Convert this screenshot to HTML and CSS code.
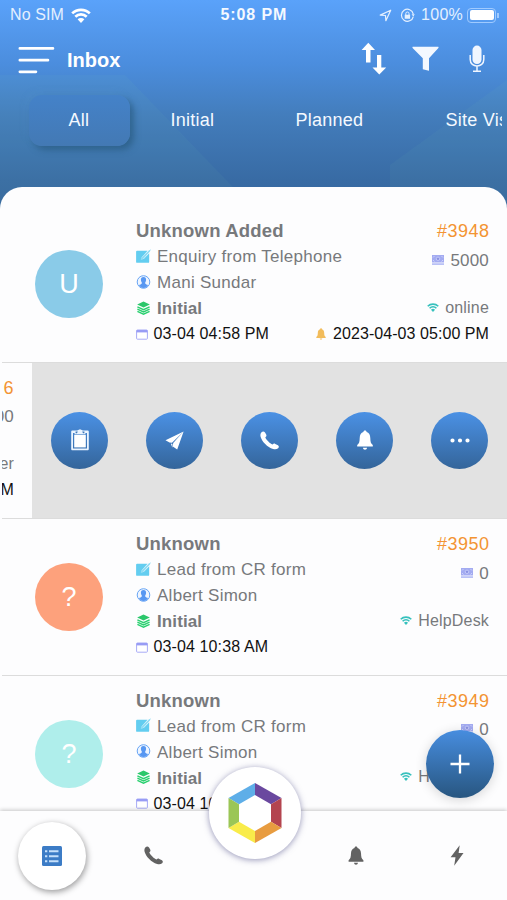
FILE: index.html
```
<!DOCTYPE html>
<html lang="en">
<head>
<meta charset="utf-8">
<title>Inbox</title>
<link rel="stylesheet" href="styles.css">
</head>
<body>
<svg class="defs" width="0" height="0">
  <defs>
    <symbol id="i-edit" viewBox="0 0 14 13"><path fill="#63cdf0" d="M1 1.600h9.800L5.500 7.500 5 9.700l2.400-.6L12.300 4V12a.9.900 0 0 1-.9.9H1a.9.900 0 0 1-.9-.9V2.500A.9.900 0 0 1 1 1.600z"/><path fill="#8fdcf4" d="M5 7.900 12 1.300 13.900.2l-.9 2.100L7 9l-2.600.9z"/></symbol>
    <symbol id="i-user" viewBox="0 0 14 14"><circle cx="7" cy="7" r="6.300" fill="#eef5ff" stroke="#68a5f5" stroke-width="1"/><path fill="#5797f2" d="M7 2c1.800 0 2.700 1.300 2.600 3-.1 1.300-.5 1.900-.9 2.500-.2 1.200 0 1.500 2.900 2.600C10.500 12 9 13 7 13s-3.500-1-4.600-2.900c2.900-1.100 3.100-1.400 2.900-2.600-.4-.6-.8-1.200-.9-2.500C4.300 3.300 5.200 2 7 2z"/></symbol>
    <symbol id="i-layers" viewBox="0 0 14 14"><path fill="#2bc76b" d="M7 .6 13.300 3.400 7 6.400.7 3.400z"/><path fill="none" stroke="#2bd070" stroke-width="1.400" d="M.9 5.900 7 8.700l6.100-2.800M.9 8.200 7 11l6.100-2.800M.9 10.400 7 13.200l6.100-2.800"/></symbol>
    <symbol id="i-cal" viewBox="0 0 12 11"><rect x=".6" y="1" width="10.800" height="9.200" rx=".8" fill="#fff" stroke="#a7aaf6"/><path fill="#989cf5" d="M.6 1h10.800v2.400H.6z"/></symbol>
    <symbol id="i-cash" viewBox="0 0 12 10"><path fill="#a3abf1" d="M0 0h12v7.500H0z"/><path fill="#b9c1f6" d="M0 8.200h12V10H0z"/><path fill="none" stroke="#dde1ff" stroke-width=".7" d="M1 2.500 2.500 1M9.500 1 11 2.500M1 5l1.500 1.500M9.500 6.500 11 5"/><circle cx="6" cy="3.800" r="1.700" fill="#8991e2" stroke="#dde1ff" stroke-width=".6"/></symbol>
    <symbol id="i-wifi" viewBox="0 0 20 15"><path fill="none" stroke="currentColor" stroke-width="2.700" d="M1.200 5.400a12.500 12.500 0 0 1 17.600 0M4.300 8.700a8.200 8.200 0 0 1 11.400 0"/><path fill="currentColor" d="M6.600 11.300a4.900 4.900 0 0 1 6.800 0L10 14.900z"/></symbol>
    <symbol id="i-bell" viewBox="0 0 16 20"><path fill="currentColor" d="M8 .5c1 0 1.600.7 1.600 1.600C12 2.800 13.200 5 13.300 8c.1 3.800.5 5.600 2.500 7v1.600H.2V15c2-1.400 2.400-3.200 2.500-7C2.800 5 4 2.800 6.400 2.100 6.400 1.200 7 .5 8 .5zM5.900 17.700h4.200c-.2 1.200-1 2-2.100 2s-1.900-.8-2.100-2z"/></symbol>
    <symbol id="i-phone" viewBox="0 0 20 20"><path fill="currentColor" d="M1.600 1.300C2.900.2 4.300.3 5.300 1.600l1.200 2c.6 1.100.3 1.900-.9 2.900.6 2.300 4.900 6.700 7.600 7.700 1-1 1.800-1.200 2.900-.6l2.800 1.500c1.200.8 1.200 2 .2 3-1.300 1.200-3.300 1.500-5.300.8C7.700 16.800 2.300 11.300.7 6.200.1 4.200.4 2.300 1.600 1.300z"/></symbol>
  </defs>
</svg>
<div class="app">
  <header class="top">
    <svg class="facets" viewBox="0 0 507 210" preserveAspectRatio="none"><path fill="#8fd0b0" opacity=".05" d="M0 75H125L255 210H0z"/><path fill="#8fd0b0" opacity=".05" d="M507 80V210H390V165z"/></svg>
    <div class="status">
      <span class="sim">No SIM</span>
      <svg class="s-wifi" viewBox="0 0 20 15"><use href="#i-wifi"/></svg>
      <span class="clock">5:08 PM</span>
      <svg class="s-loc" viewBox="0 0 14 14"><path fill="none" stroke="#e4f0ff" stroke-width="1.300" stroke-linejoin="round" d="M1.300 6.600 12.600 1.300 7.400 12.600 7 7z"/></svg>
      <svg class="s-lock" viewBox="0 0 15 15"><path fill="none" stroke="#e4f0ff" stroke-width="1.200" d="M13.300 8.500A6 6 0 1 1 13.300 6"/><path fill="#e4f0ff" d="M11.600 6.300h3.200l-1.500 2.300zM4.700 6.700h5.400v4H4.700z"/><path fill="none" stroke="#e4f0ff" d="M5.800 7V5.600a1.600 1.600 0 0 1 3.200 0V7"/></svg>
      <span class="pct">100%</span>
      <span class="battery"><i></i></span><b class="nub"></b>
    </div>
    <div class="titlebar">
      <svg class="menu" viewBox="0 0 38 28"><path stroke="#fff" stroke-width="2.800" stroke-linecap="round" d="M2.900 2.400h33M2.900 14.200h28M2.900 25.800h16"/></svg>
      <h1>Inbox</h1>
      <svg class="t-sort" viewBox="0 0 26 33"><path fill="#fff" d="M7.300.7 14 8H9.500v12.500H5V8H.6zM16 13h4.300v12.500h4.900L18.300 32.400 11.500 25.500H16z"/></svg>
      <svg class="t-filter" viewBox="0 0 27 26"><path fill="#f3f8ff" d="M1 .8h25c.5 0 .8.7.4 1.200L17 12.300V24.700L10.800 23.300V12.300L.6 2C.2 1.500.5.8 1 .8z"/></svg>
      <svg class="t-mic" viewBox="0 0 16 28"><rect x="3.500" y=".6" width="9" height="18.500" rx="4.500" fill="#f0f6ff"/><path fill="none" stroke="#f0f6ff" stroke-width="1.500" d="M1.200 10v4.500c0 8.600 13.600 8.600 13.600 0V10M8 21v5M4 26.300h8"/></svg>
    </div>
    <nav class="tabs">
      <span class="tab active">All</span><span class="tab initial">Initial</span><span class="tab planned">Planned</span><span class="tab site">Site Vis</span>
    </nav>
  </header>

  <main class="list">
    <article class="row">
      <div class="avatar blue">U</div>
      <div class="info">
        <h2>Unknown Added</h2>
        <p class="l-src"><svg><use href="#i-edit"/></svg><span>Enquiry from Telephone</span></p>
        <p class="l-own"><svg><use href="#i-user"/></svg><span>Mani Sundar</span></p>
        <p class="l-stage"><svg><use href="#i-layers"/></svg><span>Initial</span></p>
        <p class="l-date"><svg><use href="#i-cal"/></svg><span>03-04 04:58 PM</span></p>
      </div>
      <div class="side">
        <p class="r-id">#3948</p>
        <p class="r-amt"><svg><use href="#i-cash"/></svg><span>5000</span></p>
        <p class="r-chan"><svg><use href="#i-wifi"/></svg><span>online</span></p>
        <p class="r-rem"><svg><use href="#i-bell"/></svg><span>2023-04-03 05:00 PM</span></p>
      </div>
    </article>

    <article class="row swiped">
      <div class="peek side">
        <p class="r-id">6</p>
        <p class="r-amt"><span>00</span></p>
        <p class="r-chan"><span>er</span></p>
        <p class="r-rem"><span>M</span></p>
      </div>
      <div class="actions">
        <button><svg width="18" height="22" viewBox="0 0 18 22"><path fill="#eaf4ff" fill-rule="evenodd" d="M1.500 1.500H6L9 .2l3 1.300h4.500c.8 0 1.300.5 1.300 1.300V20c0 .8-.5 1.300-1.300 1.300h-15C.7 21.300.2 20.800.2 20V2.800c0-.8.5-1.300 1.300-1.300zM2 4v15.500h14V4h-1.600v1.300H3.600V4z"/><path fill="#fff" d="M3.200 5.800h11.600v12.600H3.200z"/><path fill="#3f78b9" d="M4.600 2.500h2.200L6 4.200H4.600zM13.400 2.500h-2.200l.8 1.700h1.400z"/></svg></button>
        <button><svg width="19" height="19" viewBox="0 0 19 19"><path fill="#fff" d="M.5 9.300 18.600.6 7 11.800l-2.500-.3zM18.600.6 12.200 18.400 7.800 15.500l.4-3.500zM5.800 12.600l1.600.3v3.800z"/></svg></button>
        <button><svg width="19" height="19"><use href="#i-phone"/></svg></button>
        <button><svg width="16" height="20"><use href="#i-bell"/></svg></button>
        <button><svg width="20" height="5" viewBox="0 0 20 5"><path stroke="#fff" stroke-width="4.200" stroke-linecap="round" d="M2.500 2.500h0M10 2.500h0M17.500 2.500h0"/></svg></button>
      </div>
    </article>

    <article class="row">
      <div class="avatar coral">?</div>
      <div class="info">
        <h2>Unknown</h2>
        <p class="l-src"><svg><use href="#i-edit"/></svg><span>Lead from CR form</span></p>
        <p class="l-own"><svg><use href="#i-user"/></svg><span>Albert Simon</span></p>
        <p class="l-stage"><svg><use href="#i-layers"/></svg><span>Initial</span></p>
        <p class="l-date"><svg><use href="#i-cal"/></svg><span>03-04 10:38 AM</span></p>
      </div>
      <div class="side">
        <p class="r-id">#3950</p>
        <p class="r-amt"><svg><use href="#i-cash"/></svg><span>0</span></p>
        <p class="r-chan"><svg><use href="#i-wifi"/></svg><span>HelpDesk</span></p>
      </div>
    </article>

    <article class="row">
      <div class="avatar mint">?</div>
      <div class="info">
        <h2>Unknown</h2>
        <p class="l-src"><svg><use href="#i-edit"/></svg><span>Lead from CR form</span></p>
        <p class="l-own"><svg><use href="#i-user"/></svg><span>Albert Simon</span></p>
        <p class="l-stage"><svg><use href="#i-layers"/></svg><span>Initial</span></p>
        <p class="l-date"><svg><use href="#i-cal"/></svg><span>03-04 10</span></p>
      </div>
      <div class="side">
        <p class="r-id">#3949</p>
        <p class="r-amt"><svg><use href="#i-cash"/></svg><span>0</span></p>
        <p class="r-chan"><svg><use href="#i-wifi"/></svg><span>HelpDesk</span></p>
      </div>
    </article>
  </main>

  <footer class="bottom">
    <div class="slot first"><span class="current"><svg width="20" height="20" viewBox="0 0 20 20"><rect width="20" height="20" rx="1.500" fill="#3c7cc6"/><path stroke="#c5e0fb" stroke-width="2" d="M3 5.200h2.300M7 5.200h9.500M3 10.200h2.300M7 10.200h9.500M3 15.200h2.300M7 15.200h9.500"/></svg></span></div>
    <div class="slot"><svg width="19" height="19"><use href="#i-phone"/></svg></div>
    <div class="slot"></div>
    <div class="slot"><svg width="16" height="19"><use href="#i-bell"/></svg></div>
    <div class="slot"><svg width="14" height="21" viewBox="0 0 14 21"><path fill="currentColor" d="M9.700.3 8.600 8h4.900L4.200 20.700 5.500 12.300H.6z"/></svg></div>
  </footer>

  <div class="logo">
    <svg width="54" height="60" viewBox="0 0 54 60">
      <path fill="#5eaee8" d="M27 0 .5 15 11 21.200 27 12z"/>
      <path fill="#6a489f" d="M27 0 53.500 15 43 21.200 27 12z"/>
      <path fill="#b4444f" d="M53.500 15V45L43 38.800V21.200z"/>
      <path fill="#e89c40" d="M53.500 45 27 60V48l16-9.200z"/>
      <path fill="#f9ec4a" d="M27 60 .5 45 11 38.800 27 48z"/>
      <path fill="#9bc656" d="M.5 15V45L11 38.800V21.200z"/>
    </svg>
  </div>
  <button class="fab"><svg width="20" height="20" viewBox="0 0 20 20"><path stroke="#fff" stroke-width="2.300" d="M10 .5v19M.5 10h19"/></svg></button>
</div>
</body>
</html>
```
FILE: styles.css
```
* { box-sizing: border-box; margin: 0; padding: 0; }
body {
  width: 507px; height: 900px; overflow: hidden;
  font-family: "Liberation Sans", Arial, sans-serif;
  background: #fdfdfd;
}
svg { display: block; flex: none; }
.defs { position: absolute; }
button { border: 0; color: #fff; }
.app { position: relative; width: 507px; height: 900px; display: flex; flex-direction: column; overflow: hidden; }

.top {
  position: relative; height: 210px; flex: none; margin-bottom: -23px;
  background: linear-gradient(#5aa2fa 0, #4b8ddd 65px, #437dbc 115px, #386ba4 180px, #35669d 210px);
  color: #f4f9ff;
}
.facets { position: absolute; inset: 0; width: 507px; height: 210px; }
.status { position: relative; height: 30px; display: flex; align-items: center; padding-left: 10px; font-size: 16px; color: #e4f0ff; }
.sim { width: 61px; letter-spacing: .1px; }
.s-wifi { width: 20px; height: 15px; color: #fff; }
.clock { margin-left: 129.500px; width: 158.500px; font-weight: bold; letter-spacing: .9px; color: #f4f9ff; }
.s-loc { width: 13px; height: 13px; }
.s-lock { width: 15px; height: 15px; margin-left: 8px; }
.pct { margin-left: 6px; width: 46px; letter-spacing: .3px; }
.battery { width: 29px; height: 15px; border: 1px solid #9fcaff; border-radius: 4px; padding: 1.500px; }
.battery i { display: block; height: 10px; border-radius: 2px; background: #fff; }
.nub { width: 1.500px; height: 5px; margin-left: 1px; background: #9fcaff; }

.titlebar { position: relative; height: 60px; display: flex; align-items: center; padding: 0 22px 0 17px; }
.menu { width: 38px; height: 28px; }
h1 { margin-left: 12px; margin-right: auto; font-size: 20px; letter-spacing: 0; color: #fff; }
.t-sort { width: 26px; height: 33px; margin-bottom: 3px; }
.t-filter { width: 27px; height: 26px; margin-left: 25px; margin-bottom: 3px; }
.t-mic { width: 16px; height: 28px; margin-left: 30px; margin-bottom: 3px; }

.tabs { position: relative; display: flex; align-items: center; height: 60px; margin: 0 5px 0 29px; overflow: visible; font-size: 18px; letter-spacing: .25px; white-space: nowrap; }
.active { width: 101px; height: 51px; line-height: 51px; padding-right: 1px; text-align: center; border-radius: 13px; background: linear-gradient(#4482c9, #4379b4); box-shadow: 4px 4px 6px rgba(38, 88, 125, .65), -3px -3px 7px rgba(86, 145, 208, .15); }
.initial { margin-left: 40.500px; width: 125px; }
.planned { width: 150px; }
.site { width: 56.500px; overflow: hidden; }

.list { position: relative; height: 624px; flex: none; overflow: hidden; padding-top: 19px; background: #fdfdfe; border-radius: 22px 22px 0 0; }
.row { position: relative; height: 156.500px; display: flex; padding: 11px 18px 0 33px; border-bottom: 1.500px solid #dcdcdc; margin-left: 2px; }
.avatar { width: 68px; height: 68px; margin: 33px 33px 0 0; border-radius: 50%; flex: none; color: #fff; font-size: 27px; line-height: 69px; text-align: center; }
.blue { background: #8acbe8; }
.coral { background: #fda17c; }
.mint { background: #afeeeb; }
.info { width: 160px; flex: none; display: grid; grid-template-rows: 27px 26px 26px 26px 24px; align-content: start; color: #77797c; white-space: nowrap; }
.info p { display: flex; align-items: center; font-size: 17px; letter-spacing: .27px; }
h2 { font-size: 18.500px; line-height: 27px; letter-spacing: .2px; color: #77797c; }
.info svg { width: 15px; height: 14px; margin: 0 6px 3px 0; }
.info .l-stage { font-weight: bold; letter-spacing: .1px; }
.info .l-date { font-size: 16px; letter-spacing: .12px; color: #111; }
.info .l-date svg { width: 12px; height: 11px; margin-right: 5.500px; margin-bottom: 0; }
.side { margin-left: auto; display: grid; grid-template-rows: 29px 29px 19px 27px 25px; align-content: start; text-align: right; white-space: nowrap; color: #77797c; }
.side p { display: flex; justify-content: flex-end; align-items: center; }
.side .r-id { color: #f39433; font-size: 18px; letter-spacing: .45px; margin-right: -.4px; }
.side .r-amt { font-size: 17px; letter-spacing: .2px; }
.r-amt svg { width: 12px; height: 10px; margin: 0 6px 2px 0; }
.side .r-chan { grid-row: 4; font-size: 16px; letter-spacing: .18px; }
.r-chan svg { width: 12px; height: 9px; margin: 0 6px 1px 0; color: #37c1bd; }
.side .r-rem { grid-row: 5; font-size: 16px; letter-spacing: .06px; color: #111; }
.r-rem svg { width: 10px; height: 12px; margin-right: 7px; color: #f2bc5b; }

.swiped { padding: 0; }
.peek { width: 30px; flex: none; margin: 0; padding: 11px 18px 0 0; overflow: hidden; }
.peek p { width: 12px; overflow: hidden; }
.actions { flex: 1; height: 155px; display: flex; align-items: center; justify-content: space-between; padding: 0 19px; background: #e2e2e2; }
.actions button { width: 57px; height: 57px; border-radius: 50%; display: flex; align-items: center; justify-content: center; background: linear-gradient(#4b91e5, #34659a); }

.bottom { position: relative; height: 89px; flex: none; display: grid; grid-template-columns: repeat(5, 1fr); padding-left: 2px; background: #fdfdfe; box-shadow: 0 -1px 4px rgba(0, 0, 0, .22); color: #626262; }
.slot { display: flex; align-items: center; justify-content: center; }
.first { padding-right: 2px; }
.current { width: 68px; height: 68px; border-radius: 50%; display: flex; align-items: center; justify-content: center; background: #fff; box-shadow: 1px 2px 6px rgba(0, 0, 0, .4); }
.logo { position: absolute; left: 209px; top: 767px; width: 92px; height: 92px; border-radius: 50%; background: #fff; box-shadow: 0 1px 6px rgba(65, 65, 125, .55); display: flex; align-items: center; justify-content: center; }
.fab { position: absolute; left: 426px; top: 730px; width: 68px; height: 68px; border-radius: 50%; display: flex; align-items: center; justify-content: center; background: linear-gradient(#478ddf, #285680); box-shadow: 0 2px 12px rgba(0, 0, 0, .16); }
```
